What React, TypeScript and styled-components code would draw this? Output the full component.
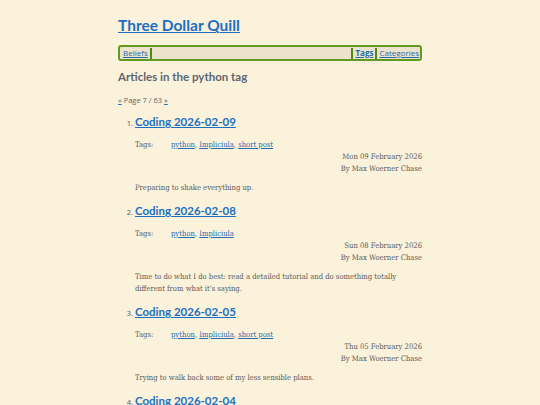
import React from "react";
import styled, { createGlobalStyle } from "styled-components";

const Global = createGlobalStyle`
  html, body { margin: 0; padding: 0; background: #fbf2dc; }
  body { font-family: "DejaVu Serif Condensed", "DejaVu Serif", serif; color: #555; }
`;

const Page = styled.div`
  width: 304px;
  margin: 0 auto;
  padding-top: 14px;
`;

const SiteTitle = styled.h1`
  margin: 0 0 9px;
  font-family: Lato, "Open Sans", sans-serif;
  font-weight: 700;
  font-size: 15.5px;
  line-height: 22px;
  a { color: #1d6fc0; text-decoration: underline; text-decoration-thickness: 1px; }
`;

const Nav = styled.nav`
  display: flex;
  align-items: center;
  height: 12px;
  border: 2px solid #62991f;
  border-radius: 3px;
  background: #ebe3cb;
  padding: 0 1px 0 3px;
  font-family: "Open Sans", "Noto Sans", sans-serif;
  font-size: 8px;
  line-height: 12px;
`;

const NavLink = styled.a<{ $bold?: boolean }>`
  color: #2a6cb0;
  font-weight: ${(p) => (p.$bold ? 700 : 400)};
  text-decoration: underline;
`;

const Sep = styled.span`
  display: inline-block;
  width: 2px;
  height: 11px;
  background: #4e8a14;
  margin: 0 2px;
`;

const Spacer = styled.div`
  flex: 1;
`;

const SectionTitle = styled.h2`
  margin: 8px 0 0;
  font-family: Lato, "Open Sans", sans-serif;
  font-weight: 700;
  font-size: 11.5px;
  line-height: 16px;
  color: #5b6670;
`;

const Pager = styled.p`
  margin: 10px 0 0;
  font-family: "Open Sans", "Noto Sans", sans-serif;
  font-size: 7.5px;
  line-height: 10px;
  color: #666;
  a { color: #2a6cb0; }
`;

const List = styled.ol`
  margin: 9px 0 0;
  padding-left: 17px;
`;

const Item = styled.li`
  font-family: "Open Sans", "Noto Sans", sans-serif;
  font-size: 7.5px;
  color: #555;
  margin-bottom: 9px;
`;

const PostTitle = styled.h3`
  margin: 0;
  font-family: Lato, "Open Sans", sans-serif;
  font-weight: 700;
  font-size: 11.5px;
  line-height: 16px;
  a { color: #1d6fc0; text-decoration: underline; }
`;

const Meta = styled.div`
  font-family: "DejaVu Serif Condensed", "DejaVu Serif", serif;
  font-size: 7.6px;
  line-height: 12px;
  color: #595959;
`;

const TagsRow = styled.div`
  display: flex;
  margin-top: 9px;
`;

const TagsLabel = styled.span`
  width: 36px;
`;

const TagLink = styled.a`
  color: #2a6cb0;
  text-decoration: underline;
`;

const Byline = styled.div`
  text-align: right;
`;

const Summary = styled.p`
  margin: 7px 0 0;
  font-family: "DejaVu Serif Condensed", "DejaVu Serif", serif;
  font-size: 7.6px;
  line-height: 12px;
  color: #595959;
`;

type Post = { title: string; tags: string[]; date: string; summary: string };

const posts: Post[] = [
  { title: "Coding 2026-02-09", tags: ["python", "Impliciula", "short post"], date: "Mon 09 February 2026", summary: "Preparing to shake everything up." },
  { title: "Coding 2026-02-08", tags: ["python", "Impliciula"], date: "Sun 08 February 2026", summary: "Time to do what I do best: read a detailed tutorial and do something totally different from what it's saying." },
  { title: "Coding 2026-02-05", tags: ["python", "Impliciula", "short post"], date: "Thu 05 February 2026", summary: "Trying to walk back some of my less sensible plans." },
  { title: "Coding 2026-02-04", tags: ["python", "Impliciula"], date: "Wed 04 February 2026", summary: "More work." },
];

export default function App() {
  return (
    <Page>
      <Global />
      <SiteTitle><a href="#">Three Dollar Quill</a></SiteTitle>
      <Nav>
        <NavLink href="#">Beliefs</NavLink>
        <Sep />
        <Spacer />
        <Sep />
        <NavLink href="#" $bold>Tags</NavLink>
        <Sep />
        <NavLink href="#">Categories</NavLink>
      </Nav>
      <SectionTitle>Articles in the python tag</SectionTitle>
      <Pager><a href="#">«</a> Page 7 / 63 <a href="#">»</a></Pager>
      <List>
        {posts.map((p) => (
          <Item key={p.title}>
            <PostTitle><a href="#">{p.title}</a></PostTitle>
            <Meta>
              <TagsRow>
                <TagsLabel>Tags:</TagsLabel>
                <span>
                  {p.tags.map((t, i) => (
                    <React.Fragment key={t}>
                      <TagLink href="#">{t}</TagLink>
                      {i < p.tags.length - 1 ? ", " : ""}
                    </React.Fragment>
                  ))}
                </span>
              </TagsRow>
              <Byline>{p.date}</Byline>
              <Byline>By Max Woerner Chase</Byline>
            </Meta>
            <Summary>{p.summary}</Summary>
          </Item>
        ))}
      </List>
    </Page>
  );
}
